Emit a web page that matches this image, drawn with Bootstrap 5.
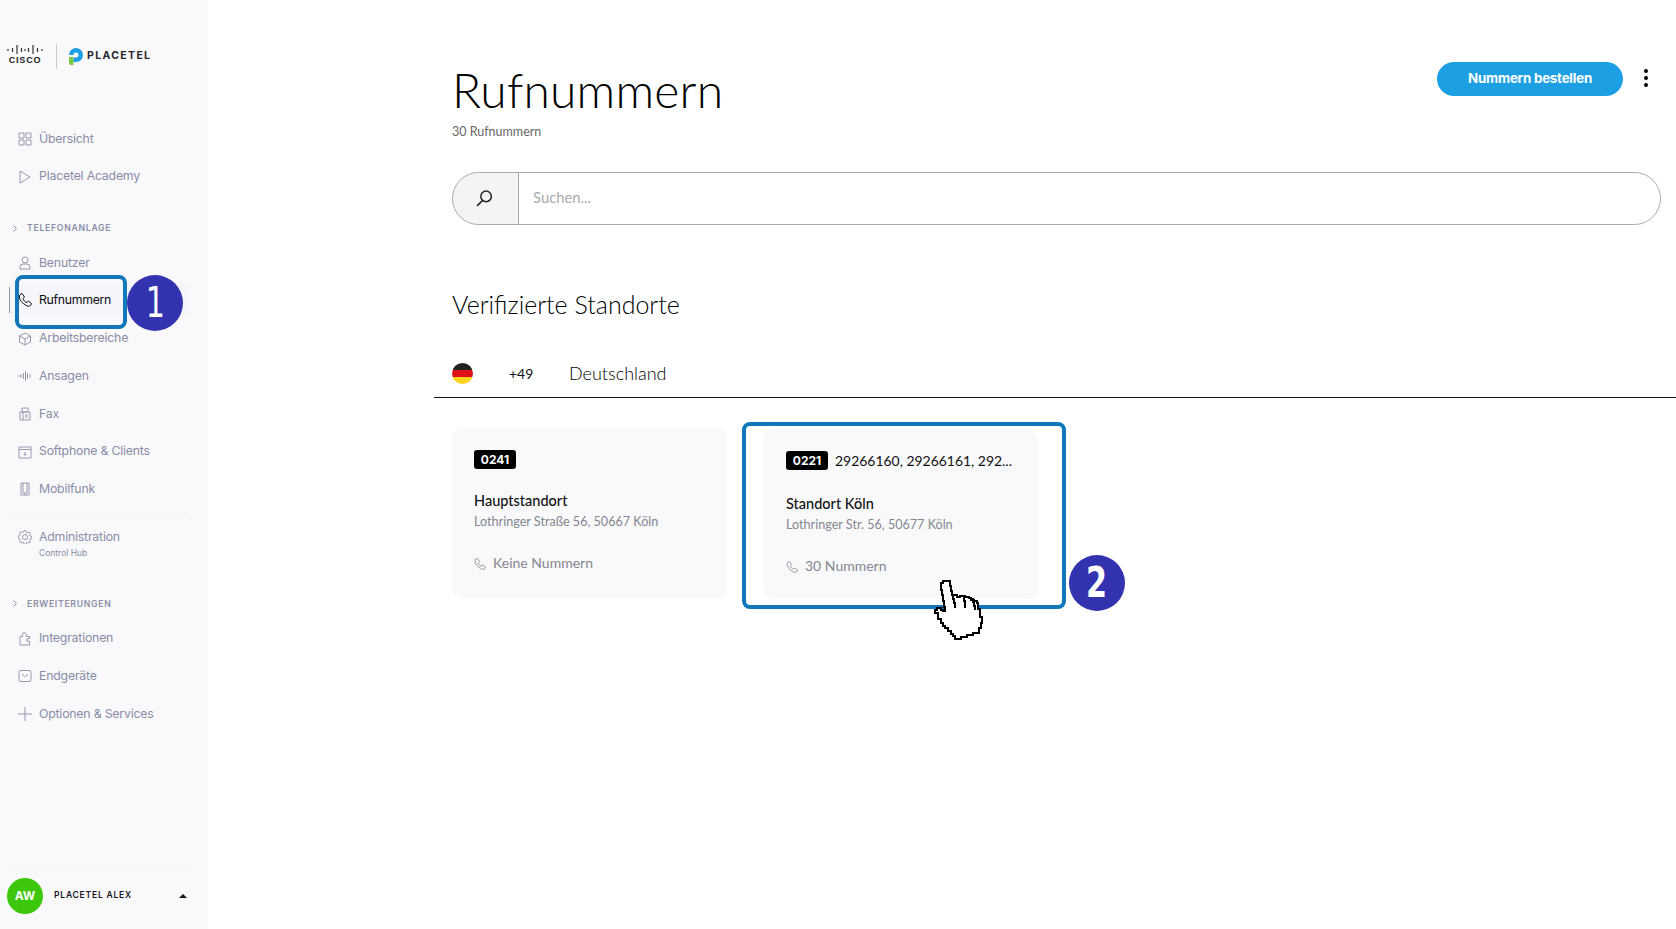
<!DOCTYPE html>
<html lang="de">
<head>
    <meta charset="UTF-8">
    <meta name="viewport" content="width=device-width, initial-scale=1">
    <title>Rufnummern</title>
    <link href="https://cdn.jsdelivr.net/npm/bootstrap@5.3.0/dist/css/bootstrap.min.css" rel="stylesheet">
    <style>
        body {
            font-family: "Lato", "Liberation Sans", sans-serif;
            color: #111;
            background: #fff;
            height: 929px;
            overflow: hidden;
        }
        #page { height: 929px; position: relative; }

        /* Seitenleiste */
        #sidebar {
            width: 208px;
            flex-shrink: 0;
            background: #f9f9fc;
            font-family: "Inter", "Liberation Sans", sans-serif;
        }
        .logo-row { height: 120px; padding: 44px 0 0 7px; }
        .logo-cisco { width: 36px; line-height: 0; }
        .cisco-word { display: block; font: 700 9px/9px "Liberation Sans", sans-serif; letter-spacing: .8px; color: #222; text-align: center; margin-top: 1px; }
        .logo-sep { width: 1px; height: 25px; background: #c9c9cc; margin: 0 12px 0 13px; }
        .placetel-word { font: 700 10.5px/16px "Inter", sans-serif; letter-spacing: 1.35px; color: #26262c; margin-left: 4px; }
        .side-link {
            height: 37.7px;
            padding-left: 18px;
            color: #8a8ca5;
            font-size: 12.3px;
            letter-spacing: -.2px;
            text-decoration: none;
            position: relative;
        }
        .side-link svg { width: 14px; height: 14px; margin-right: 7px; flex-shrink: 0; fill: none; stroke: #9698ae; stroke-width: 1; }
        .side-active { color: #0b0b12; background: #f5f6fb; margin-left: 8px; margin-right: 21px; padding-left: 10px; height: 34px; margin-top: 1px; margin-bottom: 2.7px; letter-spacing: -.3px; }
        .side-active::before { content: ""; position: absolute; left: 1px; top: 4px; bottom: 4px; width: 1px; background: #9a9ca8; }
        .side-active svg { stroke: #111; }
        .side-label {
            font-size: 8.7px;
            line-height: 14px;
            font-weight: 600;
            letter-spacing: .7px;
            color: #8d8fa6;
            padding-left: 13px;
            text-transform: uppercase;
        }
        .side-label svg { width: 4px; height: 7px; margin-right: 10px; fill: none; stroke: #8d8fa6; stroke-width: 1; }
        .label-tel { margin-top: 26px; }
        .nav-tel { margin-top: 9px; }
        .label-ext { margin-top: 29px; }
        .nav-ext { margin-top: 9px; }
        .side-sep { height: 1px; background: #f2f2f7; margin: 5px 21px 0 7px; }
        .admin-link { height: 39px; padding-left: 18px; color: #8a8ca5; font-size: 12.3px; letter-spacing: -.2px; margin-top: 14.500px; }
        .admin-link svg { width: 14px; height: 14px; margin-right: 7px; margin-top: 1px; flex-shrink: 0; fill: none; stroke: #9698ae; stroke-width: 1; }
        .admin-link > div > span { display: block; line-height: 16px; }
        .admin-sub { font-size: 8.5px; letter-spacing: 0; line-height: 14px !important; margin-top: 1px; }
        .side-foot { height: 62px; margin: 0 21px 0 7px; padding-bottom: 6px; border-top: 1px solid #f2f2f7; }
        .avatar-circle { width: 36px; height: 36px; border-radius: 50%; background: #3dc70b; color: #fff; font-size: 12px; font-weight: 700; }
        .foot-name { font-size: 8.5px; font-weight: 600; letter-spacing: .8px; color: #16161c; margin-left: 11px; }
        .foot-caret { width: 0; height: 0; border-left: 4px solid transparent; border-right: 4px solid transparent; border-bottom: 4px solid #111; }

        /* Hauptbereich */
        #content { padding: 60px 15px 0 244px; min-width: 0; }
        .page-title { font-size: 48px; font-weight: 300; line-height: 60px; margin: 0; letter-spacing: .2px; color: #000; }
        .page-sub { font-size: 12.5px; line-height: 16px; color: #666; margin-top: 4px; }
        .order-btn { background: #1d9fe3; color: #fff; border: 0; border-radius: 17px; width: 186px; height: 34px; font: 700 13.3px "Inter", sans-serif; letter-spacing: -.2px; padding: 0 0 2px; margin-top: 2px; }
        .order-btn:hover { background: #1d9fe3; color: #fff; }
        .dots-btn { width: 4px; margin: 0 13px 0 21px; gap: 3px; }
        .dots-btn i { display: block; width: 4px; height: 4px; border-radius: 50%; background: #000; }
        .search-box { margin-top: 32px; height: 53px; }
        .search-box .input-group-text { width: 67px; justify-content: center; background: #f4f4f4; border-color: #aaa; border-radius: 27px 0 0 27px; padding-right: 3px !important; }
        .search-box .form-control { border-color: #aaa; border-radius: 0 27px 27px 0 !important; padding: 0 14px 2px; font-size: 14.8px; box-shadow: none; }
        .search-box .form-control::placeholder { color: #aaa; }
        .section-title { font-size: 25px; font-weight: 300; line-height: 30px; margin: 64px 0 28px; color: #000; }
        .country-row { height: 51px; margin: 0 -15px 0 -18px; padding: 2px 0 0 18px; border-bottom: 1px solid #111; }
        .country-flag { width: 21px; height: 21px; border-radius: 50%; background: linear-gradient(#222 0 33%, #e0101a 33% 66%, #ffd21c 66%); }
        .country-code { font-size: 14px; margin-left: 36px; width: 60px; }
        .country-name { font-size: 18px; font-weight: 300; color: #000; }
        .site-list { margin-top: 30px; gap: 36px; }
        .site-card { width: 275px; height: 170px; border: 0; border-radius: 10px; background: #f9f9fb; padding: 22px 22px 0; }
        .site-card-2 { margin-top: 1px; padding-left: 23px; }
        .site-card-2 .site-name { margin-top: 23.500px; }
        .area-badge { background: #000; color: #fff; border-radius: 3px; font: 700 12px/19px "Inter", sans-serif; width: 42px; height: 19px; text-align: center; flex-shrink: 0; }
        .area-nums { font-size: 13.95px; margin-left: 7px; line-height: 19px; white-space: nowrap; }
        .site-name { font-size: 14.5px; margin-top: 22px; line-height: 20px; font-weight: 500; }
        .site-addr { font-size: 12.6px; color: #85878f; line-height: 20px; margin-top: 1px; }
        .site-count { font-size: 14px; color: #85878f; margin-top: 21px; line-height: 20px; }
        .site-count svg { width: 12px; height: 12px; margin-right: 7px; margin-top: 2px; fill: none; stroke: #85878f; stroke-width: 1; }

        /* Markierungen im Screenshot */
        .hl-box { position: absolute; border: 4px solid #1277bb; border-radius: 8px; }
        .hl-one { left: 15px; top: 275px; width: 112px; height: 54px; }
        .hl-two { left: 742px; top: 422px; width: 324px; height: 187px; }
        .step-dot { position: absolute; width: 56px; height: 56px; border-radius: 50%; background: #3333b0; color: #fff; font: 400 42px/56px "DejaVu Sans", sans-serif; text-align: center; }
        .step-digit { display: inline-block; transform: scaleX(.72); }
        .step-one { left: 127px; top: 275px; }
        .step-two { left: 1069px; top: 555px; font-weight: 700; }
        .hand-cursor { position: absolute; left: 930px; top: 578px; width: 60px; height: 64px; }
    </style>
</head>
<body>
<div id="page" class="d-flex">

    <aside id="sidebar" class="d-flex flex-column">
        <div class="logo-row d-flex align-items-start">
            <div class="logo-cisco">
                <svg width="36" height="11" viewBox="0 0 36 11" stroke="#333" stroke-width="1.2"><path d="M1 5v2M5.500 4v4M10 1v9M14.500 4v4M18 5v2M21.500 4v4M26 1v9M30.500 4v4M35 5v2"/></svg>
                <span class="cisco-word">CISCO</span>
            </div>
            <div class="logo-sep"></div>
            <svg width="14" height="17" viewBox="0 0 14 17" class="mt-1"><path d="M0 9h4.500v8H2a2 2 0 0 1-2-2z" fill="#7ac943"/><path d="M0 7a7 7 0 1 1 7 7H4.500V9.500H7a2.500 2.500 0 1 0-2.500-2.500H0z" fill="#1d9fe3"/></svg>
            <span class="placetel-word mt-1">PLACETEL</span>
        </div>

        <nav class="d-flex flex-column">
            <a class="side-link d-flex align-items-center" href="#"><svg viewBox="0 0 14 14"><path d="M1 1h5v5H1zM8 1h5v5H8zM1 8h5v5H1zM8 8h5v5H8z"/></svg>Übersicht</a>
            <a class="side-link d-flex align-items-center" href="#"><svg viewBox="0 0 14 14"><path d="M2 1l10 6-10 6z"/></svg>Placetel Academy</a>
        </nav>

        <div class="side-label label-tel d-flex align-items-center"><svg viewBox="0 0 4 7"><path d="M.500.500l3 3-3 3"/></svg>Telefonanlage</div>

        <nav class="nav-tel d-flex flex-column">
            <a class="side-link d-flex align-items-center" href="#"><svg viewBox="0 0 14 14"><circle cx="7" cy="4" r="3"/><path d="M2 13v-2a3 3 0 0 1 3-3h4a3 3 0 0 1 3 3v2z"/></svg>Benutzer</a>
            <a class="side-link side-active d-flex align-items-center" href="#"><svg viewBox="0 0 14 14"><path d="M2 1.500l2-1 2.500 3.500-1.500 1.500c.5 2 2 3.500 4 4l1.500-1.500L13.500 10.500l-1 2c-1 1-3 1-5-.5C4 10 2 7.500 1.500 5c-.3-1.500 0-2.800.5-3.500z"/></svg>Rufnummern</a>
            <a class="side-link d-flex align-items-center" href="#"><svg viewBox="0 0 14 14"><path d="M7 1l5.500 3v6L7 13l-5.500-3V4zM1.500 4L7 7l5.500-3M7 7v6"/></svg>Arbeitsbereiche</a>
            <a class="side-link d-flex align-items-center" href="#"><svg viewBox="0 0 14 14"><path d="M1 6v2M3 5v4M5.500 4v6M7.500 2v10M9.500 4v6M12 5v4"/></svg>Ansagen</a>
            <a class="side-link d-flex align-items-center" href="#"><svg viewBox="0 0 14 14"><path d="M4 1h6v4H4zM2 5h10v8H2zM5 5v8M7 8h3M7 10h3"/></svg>Fax</a>
            <a class="side-link d-flex align-items-center" href="#"><svg viewBox="0 0 14 14"><path d="M1 2h12v11H1zM1 4.500h12M7 7v3M5.500 9L7 10.500 8.500 9"/></svg>Softphone &amp; Clients</a>
            <a class="side-link d-flex align-items-center" href="#"><svg viewBox="0 0 14 14"><path d="M3 1h8v12H3zM5 1v10h4V1M6 12h2"/></svg>Mobilfunk</a>
        </nav>
        <div class="side-sep"></div>
        <div class="admin-link d-flex align-items-start">
            <svg viewBox="0 0 14 14"><circle cx="7" cy="7" r="2.500"/><path d="M6 .7h2l.4 1.600 1.300.5 1.400-.8 1.400 1.400-.8 1.400.5 1.300 1.600.4v2l-1.600.4-.5 1.300.8 1.400-1.400 1.400-1.400-.8-1.300.5-.4 1.600H6l-.4-1.600-1.300-.5-1.400.8-1.400-1.400.8-1.400-.5-1.300L.2 8V6l1.600-.4.500-1.300-.8-1.400 1.400-1.400 1.400.8 1.300-.5z"/></svg>
            <div><span>Administration</span><span class="admin-sub">Control Hub</span></div>
        </div>

        <div class="side-label label-ext d-flex align-items-center"><svg viewBox="0 0 4 7"><path d="M.500.500l3 3-3 3"/></svg>Erweiterungen</div>

        <nav class="nav-ext d-flex flex-column">
            <a class="side-link d-flex align-items-center" href="#"><svg viewBox="0 0 14 14"><path d="M2 4.500h2.500V2.500a1.800 1.800 0 0 1 3.600 0v2h3.400v2.200H10a1.300 1.300 0 0 0 0 2.600h1.500V13H2z"/></svg>Integrationen</a>
            <a class="side-link d-flex align-items-center" href="#"><svg viewBox="0 0 14 14"><rect x="1" y="1.500" width="12" height="11" rx="2"/><path d="M4.500 5c.5 2 1.500 2.500 2.500 2.500S9 7 9.500 5"/></svg>Endgeräte</a>
            <a class="side-link d-flex align-items-center" href="#"><svg viewBox="0 0 14 14"><path d="M7 0v14M0 7h14"/></svg>Optionen &amp; Services</a>
        </nav>

        <div class="side-foot mt-auto d-flex align-items-center">
            <div class="avatar-circle d-flex align-items-center justify-content-center">AW</div>
            <span class="foot-name flex-grow-1">PLACETEL ALEX</span>
            <span class="foot-caret"></span>
        </div>
    </aside>

    <main id="content" class="flex-grow-1">
        <div class="d-flex justify-content-between align-items-start">
            <div>
                <h1 class="page-title">Rufnummern</h1>
                <div class="page-sub">30 Rufnummern</div>
            </div>
            <div class="d-flex align-items-center">
                <button class="btn order-btn">Nummern bestellen</button>
                <div class="dots-btn d-flex flex-column"><i></i><i></i><i></i></div>
            </div>
        </div>

        <div class="input-group search-box">
            <span class="input-group-text p-0">
                <svg width="19" height="19" viewBox="0 0 18 18" fill="none" stroke="#222" stroke-width="1.400"><circle cx="10.500" cy="7" r="5"/><path d="M7 11l-5 5"/></svg>
            </span>
            <input type="text" class="form-control" placeholder="Suchen...">
        </div>

        <h2 class="section-title">Verifizierte Standorte</h2>

        <div class="country-row d-flex align-items-center">
            <span class="country-flag"></span>
            <span class="country-code">+49</span>
            <span class="country-name">Deutschland</span>
        </div>

        <div class="site-list d-flex align-items-start">
            <div class="card site-card">
                <div class="d-flex"><span class="area-badge">0241</span></div>
                <div class="site-name">Hauptstandort</div>
                <div class="site-addr">Lothringer Straße 56, 50667 Köln</div>
                <div class="site-count d-flex align-items-center">
                    <svg viewBox="0 0 14 14"><path d="M2 1.500l2-1 2.500 3.500-1.500 1.500c.5 2 2 3.500 4 4l1.500-1.500L13.500 10.500l-1 2c-1 1-3 1-5-.5C4 10 2 7.500 1.500 5c-.3-1.500 0-2.800.5-3.500z"/></svg>Keine Nummern
                </div>
            </div>
            <div class="card site-card site-card-2">
                <div class="d-flex"><span class="area-badge">0221</span><span class="area-nums">29266160, 29266161, 292...</span></div>
                <div class="site-name">Standort Köln</div>
                <div class="site-addr">Lothringer Str. 56, 50677 Köln</div>
                <div class="site-count d-flex align-items-center">
                    <svg viewBox="0 0 14 14"><path d="M2 1.500l2-1 2.500 3.500-1.500 1.500c.5 2 2 3.500 4 4l1.500-1.500L13.500 10.500l-1 2c-1 1-3 1-5-.5C4 10 2 7.500 1.500 5c-.3-1.500 0-2.800.5-3.500z"/></svg>30 Nummern
                </div>
            </div>
        </div>
    </main>

    <!-- Markierungen -->
    <div class="hl-box hl-one"></div>
    <div class="step-dot step-one"><span class="step-digit">1</span></div>
    <div class="hl-box hl-two"></div>
    <div class="step-dot step-two"><span class="step-digit">2</span></div>
    <svg class="hand-cursor" viewBox="0 0 60 64" shape-rendering="crispEdges">
        <path d="M11 5h2V3h7v5h1v5h1v4h5v2h3v-1h5v1h4v1h2v2h3v1h3v2h1v6h2v8h2v6h-1v5h-2v5h-6v2h-6v2h-6v2h-6v-3h-2v-2h-2v-3h-3v-3h-3v-2h-2v-3h-2v-4h-3v-3H8v-3H5v-3h2v-2h4v2h2v1h2v-4h-1v-6h-1v-6h-1v-5h-1z" fill="#fff" stroke="#000" stroke-width="2"/>
        <path d="M23 18v3h1v4h1v5M34 19v4h1v7M43 20v4h1v4h1v4" fill="none" stroke="#000" stroke-width="2"/>
    </svg>
</div>
<script src="https://cdn.jsdelivr.net/npm/bootstrap@5.3.0/dist/js/bootstrap.bundle.min.js"></script>
</body>
</html>
